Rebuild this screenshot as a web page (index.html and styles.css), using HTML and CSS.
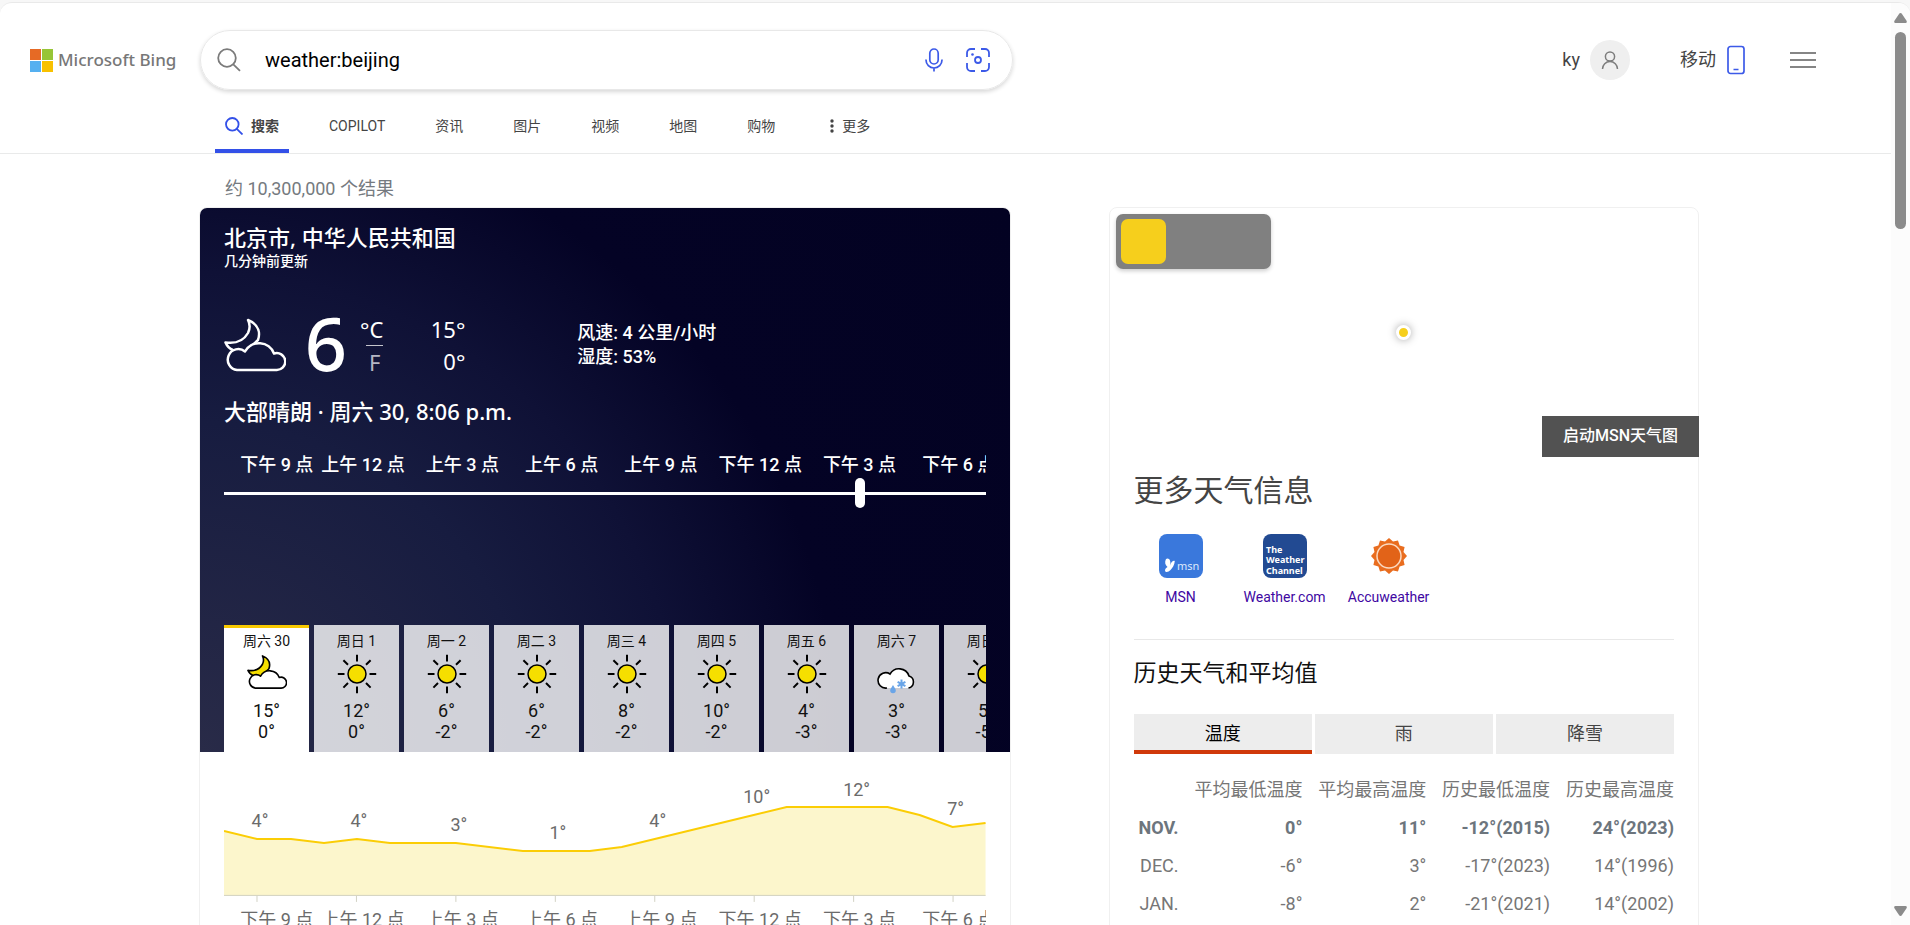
FILE: index.html
```html
<!DOCTYPE html>
<html lang="zh-CN">
<head>
<meta charset="utf-8">
<meta name="viewport" content="width=device-width, initial-scale=1">
<title>weather:beijing - 搜索</title>
<link rel="stylesheet" href="styles.css">
</head>
<body>
<svg class="sprite" aria-hidden="true">
  <symbol id="moon-cloud" viewBox="0 0 62 54">
    <path class="moon" d="M24 2C36 7 36 16 34 22L21 34L9 32C6 31 3 28 1.500 24.500C12 26 20 22 24 15C26 11 26 6 24 2Z"/>
    <path class="cloud" d="M13 52A10.500 10.500 0 1 1 21 33.500A16 16 0 0 1 50 35.500A8.500 8.500 0 1 1 52 52Z"/>
  </symbol>
  <symbol id="sun" viewBox="0 0 40 40">
    <circle cx="20" cy="20" r="9" fill="#f6df00" stroke="#000" stroke-width="1.500"/>
    <path d="M20 .8V7.500M20 32.500V39.200M.8 20H7.500M32.500 20H39.200M6.400 6.200L11 10.800M33.600 6.200L29 10.800M6.400 33.600L11 29M33.600 33.600L29 29" stroke="#000" stroke-width="2" fill="none"/>
  </symbol>
  <symbol id="sleet" viewBox="0 0 40 40">
    <path d="M9 34A7.700 7.700 0 1 1 13 19.500A10.500 10.500 0 0 1 32 22A6.200 6.200 0 0 1 32 34Z" fill="#fff"/>
    <path d="M10 34A7.700 7.700 0 1 1 13 20A10.500 10.500 0 0 1 32 22A6.200 6.200 0 0 1 31.500 34" fill="none" stroke="#000" stroke-width="1.600"/>
    <path d="M16 31C17.500 33.500 18.800 35 18.800 36.500A2.800 2.800 0 0 1 13.200 36.500C13.200 35 14.500 33.500 16 31Z" fill="#6aa5e8"/>
    <path d="M24.500 25.500V34.500M20.600 27.800L28.400 32.200M28.400 27.800L20.600 32.200" stroke="#6aa5e8" stroke-width="2" fill="none"/>
  </symbol>
</svg>
<div class="window">
  <div class="page">
    <header class="header">
      <div class="topbar">
        <a class="brand" href="#">
          <svg width="23" height="23" viewBox="0 0 23 23" aria-hidden="true"><path fill="#e66a25" d="M0 0h11v11H0z"/><path fill="#97c536" d="M12 0h11v11H12z"/><path fill="#55b0f0" d="M0 12h11v11H0z"/><path fill="#f8c100" d="M12 12h11v11H12z"/></svg>
          <span>Microsoft Bing</span>
        </a>
        <form class="search">
          <svg width="24" height="24" viewBox="0 0 24 24" fill="none" stroke="#7b7b7b" stroke-width="1.800" aria-hidden="true"><circle cx="10" cy="10" r="8.800"/><path d="M16.300 16.300L23 22.800"/></svg>
          <input type="text" aria-label="搜索" value="weather:beijing">
          <button type="button" aria-label="语音搜索"><svg width="24" height="24" viewBox="0 0 24 24" fill="none" stroke="#3c5ae8" stroke-width="1.700"><rect x="7.800" y="1" width="8.400" height="15" rx="4.200"/><path d="M4 11.500v.5a8 8 0 0 0 16 0v-.5M12 20v3.500"/></svg></button>
          <button type="button" aria-label="图像搜索"><svg width="24" height="24" viewBox="0 0 24 24" fill="none" stroke="#3c5ae8" stroke-width="1.800"><path d="M1 9V5a4 4 0 0 1 4-4h4M15 1h4a4 4 0 0 1 4 4v4M23 15v4a4 4 0 0 1-4 4h-4M9 23H5a4 4 0 0 1-4-4v-4"/><circle cx="12" cy="12" r="3"/><circle cx="6.500" cy="6.500" r="1.300" fill="#3c5ae8" stroke="none"/></svg></button>
        </form>
        <div class="account">
          <a class="user" href="#"><span>ky</span><span class="avatar"><svg width="18" height="20" viewBox="0 0 18 20" fill="none" stroke="#7d7d7d" stroke-width="1.500"><circle cx="9" cy="6.500" r="4.600"/><path d="M1.500 19a7.500 7.500 0 0 1 15 0"/></svg></span></a>
          <a class="mobile" href="#"><span>移动</span><svg width="18" height="30" viewBox="0 0 18 30" fill="none" stroke="#3c5ae8" stroke-width="1.700"><rect x="1" y="1.500" width="16" height="27" rx="2.500"/><path d="M6.500 24.500h5"/></svg></a>
          <button type="button" class="menu" aria-label="设置和快速链接"><svg width="26" height="18" viewBox="0 0 26 18" stroke="#858585" stroke-width="2"><path d="M0 2h26M0 9h26M0 16h26"/></svg></button>
        </div>
      </div>
      <nav class="tabs">
        <a class="tab active" href="#"><svg width="18" height="18" viewBox="0 0 18 18" fill="none" stroke="#3350e8" stroke-width="1.800"><circle cx="7.300" cy="7.300" r="6.300"/><path d="M11.800 11.800L17.500 17.500"/></svg>搜索</a>
        <a class="tab" href="#">COPILOT</a>
        <a class="tab" href="#">资讯</a>
        <a class="tab" href="#">图片</a>
        <a class="tab" href="#">视频</a>
        <a class="tab" href="#">地图</a>
        <a class="tab" href="#">购物</a>
        <a class="tab more" href="#"><svg width="4" height="14" viewBox="0 0 4 14" fill="#444"><circle cx="2" cy="2" r="1.700"/><circle cx="2" cy="7" r="1.700"/><circle cx="2" cy="12" r="1.700"/></svg>更多</a>
      </nav>
    </header>
    <p class="count">约 10,300,000 个结果</p>
    <main class="results">
      <section class="weather">
        <div class="night">
          <h1 class="place">北京市, 中华人民共和国</h1>
          <p class="updated">几分钟前更新</p>
          <div class="current">
            <svg class="now-icon" width="62" height="54" aria-hidden="true"><use href="#moon-cloud"/></svg>
            <span class="degree">6</span>
            <span class="units"><span>°C</span><a href="#">F</a></span>
            <span class="range"><span>15°</span><span>0°</span></span>
            <span class="facts"><span>风速: 4 公里/小时</span><span>湿度: 53%</span></span>
          </div>
          <p class="summary">大部晴朗 · 周六 30, 8:06 p.m.</p>
          <div class="clip"><ul class="hours">
            <li>下午 9 点</li><li>上午 12 点</li><li>上午 3 点</li><li>上午 6 点</li><li>上午 9 点</li><li>下午 12 点</li><li>下午 3 点</li><li>下午 6 点</li>
          </ul></div>
          <input class="slider" type="range" min="0" max="1000" value="840" aria-label="时间">
          <ul class="days">
            <li class="day today"><span>周六 30</span><svg class="day-icon"><use href="#moon-cloud"/></svg><b>15°</b><i>0°</i></li>
            <li class="day"><span>周日 1</span><svg class="day-icon"><use href="#sun"/></svg><b>12°</b><i>0°</i></li>
            <li class="day"><span>周一 2</span><svg class="day-icon"><use href="#sun"/></svg><b>6°</b><i>-2°</i></li>
            <li class="day"><span>周二 3</span><svg class="day-icon"><use href="#sun"/></svg><b>6°</b><i>-2°</i></li>
            <li class="day"><span>周三 4</span><svg class="day-icon"><use href="#sun"/></svg><b>8°</b><i>-2°</i></li>
            <li class="day"><span>周四 5</span><svg class="day-icon"><use href="#sun"/></svg><b>10°</b><i>-2°</i></li>
            <li class="day"><span>周五 6</span><svg class="day-icon"><use href="#sun"/></svg><b>4°</b><i>-3°</i></li>
            <li class="day"><span>周六 7</span><svg class="day-icon"><use href="#sleet"/></svg><b>3°</b><i>-3°</i></li>
            <li class="day"><span>周日 8</span><svg class="day-icon"><use href="#sun"/></svg><b>5°</b><i>-5°</i></li>
          </ul>
        </div>
        <div class="chart">
          <svg viewBox="0 0 762 152" role="img" aria-label="气温">
            <path fill="#fcf6cc" d="M0 79L33 87H67L100 91L133 87L166 91H232L299 99H366L398 95L431 87L530 63L563 55H664L696 63L729 75L762 71V144H0Z"/>
            <path fill="none" stroke="#fbcd05" stroke-width="2" d="M0 79L33 87H67L100 91L133 87L166 91H232L299 99H366L398 95L431 87L530 63L563 55H664L696 63L729 75L762 71"/>
            <path fill="none" stroke="#d2d2c4" d="M0 143.500H762M33 144v6M132.500 144v6M232 144v6M331.500 144v6M431 144v6M530.500 144v6M630 144v6M729.500 144v6"/>
            <g class="values"><text x="36" y="75">4°</text><text x="135" y="75">4°</text><text x="235" y="79">3°</text><text x="334" y="87">1°</text><text x="434" y="75">4°</text><text x="533" y="51">10°</text><text x="633" y="44">12°</text><text x="732" y="63">7°</text></g>
          </svg>
          <div class="clip"><ul class="hours">
            <li>下午 9 点</li><li>上午 12 点</li><li>上午 3 点</li><li>上午 6 点</li><li>上午 9 点</li><li>下午 12 点</li><li>下午 3 点</li><li>下午 6 点</li>
          </ul></div>
        </div>
      </section>
      <aside class="side">
        <div class="map">
          <button type="button" class="switch" aria-label="地图图层"><span></span></button>
          <span class="pin"></span>
          <a class="launch" href="#">启动MSN天气图</a>
        </div>
        <div class="info">
          <h2>更多天气信息</h2>
          <div class="sources">
            <a href="#"><svg width="44" height="44" viewBox="0 0 44 44" aria-hidden="true"><rect width="44" height="44" rx="8" fill="#3a78dc"/><path fill="#fff" d="M7 25C9.500 23 12.500 26 11 31.500C12 28.500 13.500 26 15.800 27C15.500 31 13.500 34 11.500 36C9.500 38 6.500 39 6 36.500C6 35 7 34 8.500 33C6 31 5.500 28 7 25Z"/><text x="18" y="36" font-size="11" fill="#dce9fb" font-family="Noto Sans, sans-serif">msn</text></svg>MSN</a>
            <a href="#"><svg width="44" height="44" viewBox="0 0 44 44" aria-hidden="true"><rect width="44" height="44" rx="8" fill="#224a92"/><g fill="#fff" font-size="9" font-weight="700" font-family="Noto Sans, sans-serif"><text x="3" y="19">The</text><text x="3" y="29">Weather</text><text x="3" y="40">Channel</text></g></svg>Weather.com</a>
            <a href="#"><svg width="44" height="44" viewBox="-22 -22 44 44" aria-hidden="true"><path fill="#e96d1f" d="M0-18L4-14.500L9-15.600L10.600-10.600L15.600-9L14.500-4L18 0L14.500 4L15.600 9L10.600 10.600L9 15.600L4 14.500L0 18L-4 14.500L-9 15.600L-10.600 10.600L-15.600 9L-14.500 4L-18 0L-14.500-4L-15.600-9L-10.600-10.600L-9-15.600L-4-14.500Z"/><circle r="12" fill="#e26318" stroke="#fbd9c0" stroke-width="1.500"/></svg>Accuweather</a>
          </div>
          <h3>历史天气和平均值</h3>
          <div class="metrics" role="tablist">
            <button type="button" role="tab" aria-selected="true">温度</button><button type="button" role="tab">雨</button><button type="button" role="tab">降雪</button>
          </div>
          <table>
            <thead><tr><th></th><th>平均最低温度</th><th>平均最高温度</th><th>历史最低温度</th><th>历史最高温度</th></tr></thead>
            <tbody>
              <tr class="current-month"><td>NOV.</td><td>0°</td><td>11°</td><td>-12°(2015)</td><td>24°(2023)</td></tr>
              <tr><td>DEC.</td><td>-6°</td><td>3°</td><td>-17°(2023)</td><td>14°(1996)</td></tr>
              <tr><td>JAN.</td><td>-8°</td><td>2°</td><td>-21°(2021)</td><td>14°(2002)</td></tr>
            </tbody>
          </table>
        </div>
      </aside>
    </main>
  </div>
  <div class="scrollbar" aria-hidden="true">
    <svg width="13" height="10" viewBox="0 0 13 10"><path fill="#8b8b8b" d="M6.500 0Q7.500 0 8 1L12.700 8Q13.200 10 11.500 10H1.500Q-.2 10 .3 8L5 1Q5.500 0 6.500 0Z"/></svg>
    <span class="thumb"></span>
    <svg class="down" width="13" height="10" viewBox="0 0 13 10"><path fill="#8b8b8b" d="M6.500 10Q7.500 10 8 9L12.700 2Q13.200 0 11.500 0H1.500Q-.2 0 .3 2L5 9Q5.500 10 6.500 10Z"/></svg>
  </div>
</div>
</body>
</html>
```
FILE: styles.css
```css
* { box-sizing: border-box; }
body {
  margin: 0;
  background: #f7f7f7;
  color: #444;
  font: 18px/24px Roboto, "Noto Sans CJK SC", sans-serif;
}
h1, h2, h3, p, ul { margin: 0; padding: 0; font-weight: 400; }
ul { list-style: none; }
a { color: inherit; text-decoration: none; }
button { padding: 0; border: 0; background: none; font: inherit; color: inherit; }
svg { display: block; flex: none; }
.sprite { position: absolute; width: 0; height: 0; }

.window {
  display: flex;
  height: calc(100vh - 2px);
  margin-top: 2px;
  overflow: hidden;
  border-top: 1px solid #e9e9e9;
  border-radius: 12px 12px 0 0;
  background: #fff;
}
.page { flex: 1; min-width: 0; overflow: hidden; }

.header { border-bottom: 1px solid #e9eaea; padding-top: 27px; }
.topbar { display: flex; align-items: center; height: 60px; padding-right: 75px; }
.brand {
  display: flex;
  align-items: center;
  gap: 5px;
  width: 200px;
  flex: none;
  padding-left: 30px;
  color: #777;
  font: 500 17px/24px "Noto Sans", sans-serif;
}
.search {
  display: flex;
  align-items: center;
  flex: 0 1 813px;
  height: 60px;
  padding: 0 22px 0 16px;
  border: 1px solid #e8e8e8;
  border-radius: 30px;
  box-shadow: 0 2px 4px rgba(0, 0, 0, .16);
}
.search input {
  flex: 1;
  min-width: 0;
  margin-left: 24px;
  padding: 0;
  border: 0;
  outline: 0;
  background: none;
  color: #000;
  font: 20px/28px Roboto, sans-serif;
}
.search button { margin-left: 20px; }
.account { display: flex; align-items: center; margin-left: auto; }
.user, .mobile { display: flex; align-items: center; gap: 10px; }
.avatar {
  display: grid;
  place-items: center;
  width: 40px;
  height: 40px;
  border-radius: 50%;
  background: #efefef;
}
.mobile { gap: 11px; margin: 0 45px 0 50px; }
.tabs { display: flex; gap: 30px; margin-left: 215px; font-size: 14px; }
.tab {
  display: flex;
  align-items: center;
  gap: 8px;
  height: 63px;
  padding: 12px 10px 0;
  border-bottom: 4px solid transparent;
}
.active { border-color: #3350e8; font-weight: 700; }
.more { padding-left: 15px; }

.count { padding: 23px 0 6px 225px; color: #757a80; }
.results {
  display: grid;
  grid-template-columns: minmax(0, 811fr) minmax(0, 590fr);
  gap: 98px;
  padding: 0 192px 0 199px;
}
.weather, .side { border: 1px solid #f0f0f0; border-radius: 8px; }
.weather { overflow: hidden; }
.night {
  padding: 17px 24px 0;
  color: #fff;
  background: radial-gradient(circle at 0 100%, #292b48 0, #171c40 330px, #0f1136 480px, #040325 640px, #030222 100%);
}
.place, .summary {
  font: 500 22px/24px "Noto Sans", "Noto Sans CJK SC", sans-serif;
}
.updated { font-size: 14px; font-weight: 500; }
.current { display: flex; align-items: center; height: 80px; margin-top: 32px; }
.now-icon { fill: none; stroke: #fff; stroke-width: 2.5; }
.degree {
  width: 60px;
  margin-left: 10px;
  text-align: center;
  font: 500 74px/76px "Noto Sans", sans-serif;
  padding-bottom: 4px;
}
.units, .range {
  display: flex;
  flex-direction: column;
  text-align: right;
  font: 22px/32px "Noto Sans", sans-serif;
}
.units { margin-left: 4px; }
.units a { margin-left: 6px; border-top: 1px solid #c5c5cd; text-align: center; color: #b5b6c4; }
.range { width: 82px; }
.facts { display: flex; flex-direction: column; margin-left: 112px; font-weight: 500; }
.summary { margin: 14px 0 30px; }
.clip { overflow: hidden; }
.hours {
  display: grid;
  grid-template-columns: 9fr repeat(7, 10fr);
  width: 103%;
  text-align: center;
  white-space: nowrap;
}
.hours li:first-child { text-align: right; }
.night .hours { font-weight: 500; }
.slider {
  appearance: none;
  display: block;
  width: 100%;
  height: 30px;
  margin: 1px 0 117px;
  background: none;
}
.slider::-webkit-slider-runnable-track { height: 3px; background: #fff; }
.slider::-webkit-slider-thumb {
  appearance: none;
  width: 10px;
  height: 30px;
  margin-top: -14px;
  border-radius: 5px;
  background: #fff;
}
.days { display: flex; gap: 5px; overflow: hidden; }
.day {
  display: flex;
  flex: none;
  flex-direction: column;
  align-items: center;
  width: 85px;
  height: 127px;
  padding-top: 6px;
  background: rgba(255, 255, 255, .8);
  color: #111;
  line-height: 21px;
}
.day span { font-size: 14px; }
.day b, .day i { font-weight: 400; font-style: normal; }
.day-icon { width: 40px; height: 40px; margin: 2px 0 6px; }
.today { padding-top: 3px; border-top: 3px solid #f8c900; background: #fff; }
.moon, .cloud { stroke-linejoin: round; }
.today .day-icon { margin: 0 0 8px; stroke: #000; stroke-width: 2.5; }
.now-icon { --cloud: #12163b; }
.today .day-icon { --moon: #f6df00; --cloud: #fff; }
.moon { fill: var(--moon, none); }
.cloud { fill: var(--cloud, none); }

.chart { padding: 0 24px; color: #6b6b6b; }
.chart svg { width: 100%; }
.chart .hours { padding-top: 4px; }
.values { fill: #6b6b6b; font-size: 18px; text-anchor: middle; }

.map { display: flex; position: relative; height: 249px; padding: 6px; }
.switch {
  width: 155px;
  height: 55px;
  padding: 5px;
  border-radius: 7px;
  background: #808080;
  box-shadow: 0 2px 4px rgba(0, 0, 0, .2);
}
.switch span { display: block; width: 45px; height: 45px; border-radius: 7px; background: #f6cf1c; }
.pin {
  position: absolute;
  top: 50%;
  left: 50%;
  width: 15px;
  height: 15px;
  margin: -8px;
  border: 3px solid #fff;
  border-radius: 50%;
  background: #f6cf1c;
  box-shadow: 0 0 9px rgba(0, 0, 0, .35);
}
.launch {
  position: absolute;
  right: -1px;
  bottom: 0;
  padding: 8px 21px 9px;
  background: #525252;
  color: #fff;
  font-size: 16px;
  font-weight: 500;
}
.info { padding: 0 24px; }
h2 { padding: 16px 0 25px; font-size: 30px; line-height: 36px; }
.sources { display: flex; gap: 10px; padding-bottom: 30px; border-bottom: 1px solid #e8e8e8; }
.sources a {
  display: flex;
  flex-direction: column;
  align-items: center;
  gap: 7px;
  width: 94px;
  color: #4007a2;
  font-size: 14px;
}
h3 { padding: 20px 0 26px; color: #111; font-size: 23px; line-height: 28px; }
.metrics { display: grid; grid-template-columns: repeat(3, 1fr); gap: 3px; }
.metrics button { height: 40px; background: #ededed; }
.metrics [aria-selected] { padding-top: 4px; border-bottom: 4px solid #d0390a; color: #000; }
table {
  width: 100%;
  margin-top: 17px;
  border-collapse: collapse;
  table-layout: fixed;
  color: #767676;
  white-space: nowrap;
}
th, td { height: 38px; padding: 0; text-align: right; font-weight: 400; }
th:first-child { width: 45px; }
.current-month td { color: #6c757d; font-weight: 700; }

.scrollbar {
  display: flex;
  flex-direction: column;
  align-items: center;
  width: 19px;
  padding: 10px 0 9px;
  background: #fcfcfc;
}
.thumb { width: 11px; height: 197px; margin-top: 9px; border-radius: 6px; background: #8b8b8b; }
.down { margin-top: auto; }
```
